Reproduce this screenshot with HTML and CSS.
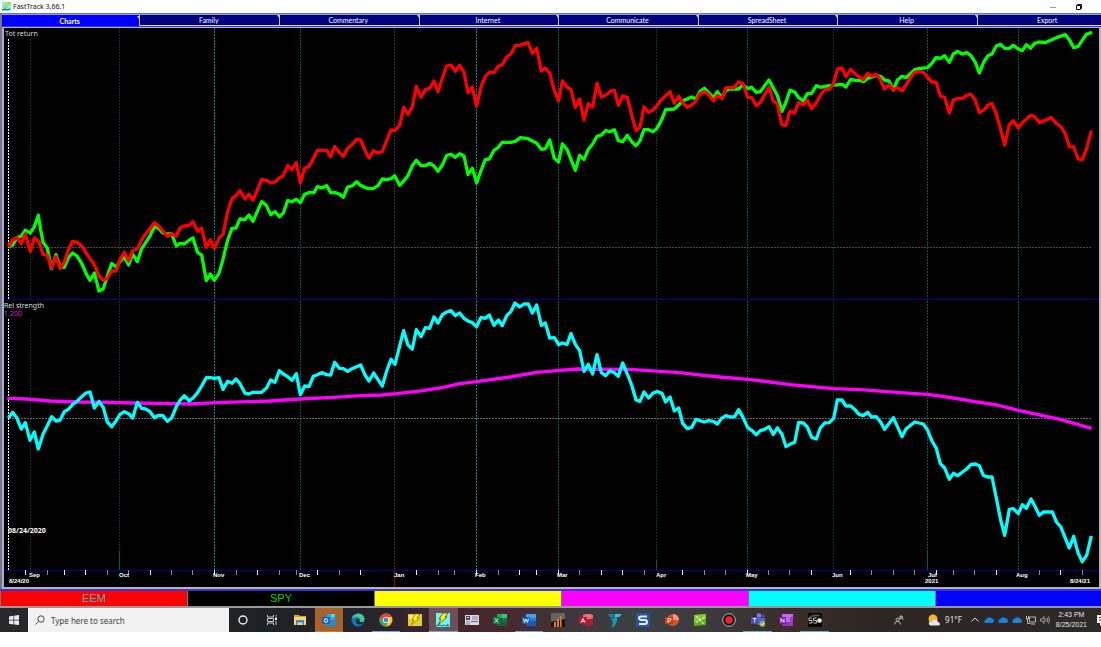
FILE: index.html
```html
<!DOCTYPE html>
<html lang="en">
<head>
<meta charset="utf-8">
<title>FastTrack 3.66.1</title>
<link rel="stylesheet" href="styles.css">
</head>
<body>
<header class="titlebar">
  <svg class="app-icon" viewBox="0 0 9 9" aria-hidden="true"><rect width="9" height="9" fill="#7ff4f4"/><path d="M5 0h3L6 3 3 7 2 8l1-4z" fill="#f4ee20" stroke="#6b7114" stroke-width=".4"/><path d="M0 8l3-1 1 1 4-1" stroke="#065" fill="none"/></svg>
  <h1 class="title">FastTrack 3.66.1</h1>
  <div class="window-buttons">
    <button class="win-btn" aria-label="Minimize"><svg viewBox="0 0 6 6"><path d="M0 3.5h6" stroke="#999"/></svg></button>
    <button class="win-btn" aria-label="Restore"><svg viewBox="0 0 6 6"><path d="M.5 1.5h4v4h-4zM1.5 1.5v-1h4v4h-1" stroke="#111" fill="none"/></svg></button>
  </div>
</header>
<main class="frame">
  <nav class="tabs">
    <button class="tab tab-active">Charts</button>
    <button class="tab">Family</button>
    <button class="tab">Commentary</button>
    <button class="tab">Internet</button>
    <button class="tab">Communicate</button>
    <button class="tab">SpreadSheet</button>
    <button class="tab">Help</button>
    <button class="tab">Export</button>
  </nav>
  <section class="chart-frame">
    <svg class="chart" viewBox="4 28 1095 559" role="img" aria-label="Total return and relative strength of EEM and SPY">
      <rect x="4" y="28" width="1095" height="559" fill="#000"/>
      <path class="grid dim" d="M30.5 39V299M30.5 319V570M119.5 28V570M833.5 28V570M656.5 28V570"/>
      <path class="grid mid" d="M300.5 28V570M558.5 28V570M747.5 28V570M927.5 28V570M1018.5 28V570"/>
      <path class="grid bright" d="M214.5 28V570M476.5 28V570"/>
      <path class="grid year" d="M394.5 28V570"/>
      <path class="base upper" d="M9 247.5H1092"/>
      <path class="base" d="M9 418.5H1092"/>
      <path class="cursor" d="M8.5 39V299M8.5 319V570"/>
      <path class="divider" d="M4 299.5H1099M4 570.5H1099"/>
      <path d="M119.5 551V570M927.5 551V570M656.5 560V570" stroke="#005a5a"/>
      <path d="M394.5 570V587" stroke="#900"/>
      <path class="tick" d="M25.5 570v5M64.5 570v5M85.5 570v5M150.5 570v5M214.5 570v5M257.5 570v5M317.5 570v5M360.5 570v5M416.5 570v5M476.5 570v5M519.5 570v5M536.5 570v5M558.5 570v5M601.5 570v5M622.5 570v5M682.5 570v5M747.5 570v5M811.5 570v5M850.5 570v5M936.5 570v5M996.5 570v5M1060.5 570v5"/>
      <path class="tick faint" d="M47.5 570v5M107.5 570v5M128.5 570v5M171.5 570v5M192.5 570v5M236.5 570v5M279.5 570v5M296.5 570v5M339.5 570v5M438.5 570v5M454.5 570v5M498.5 570v5M579.5 570v5M644.5 570v5M704.5 570v5M725.5 570v5M768.5 570v5M789.5 570v5M871.5 570v5M893.5 570v5M914.5 570v5M953.5 570v5M974.5 570v5M1039.5 570v5M1082.5 570v5"/>
      <g class="series" transform="scale(.333333)">
        <polyline stroke="#f0f" points="22,1195 80,1197 150,1203 240,1206 330,1207 400,1209 480,1210 570,1212 650,1208 810,1203 900,1197 1000,1192 1080,1187 1145,1185 1190,1181 1270,1172 1330,1162 1380,1151 1430,1145 1530,1131 1610,1117 1680,1111 1730,1107 1890,1108 1980,1114 2040,1118 2110,1126 2160,1131 2245,1138 2310,1146 2370,1154 2500,1166 2580,1169 2700,1178 2782,1183 2860,1194 2920,1204 2990,1215 3055,1231 3180,1258 3275,1285"/>
        <polyline stroke="#0f0" points="25,741 38,735 51,713 64,708 76,691 91,699 103,680 115,646 122,690 129,726 142,745 154,806 168,764 180,800 193,802 205,773 218,759 231,768 245,790 258,820 270,841 283,819 297,873 310,866 322,828 335,791 348,800 360,785 373,770 386,795 398,762 412,785 425,746 437,728 450,708 463,680 476,685 489,699 502,702 515,702 529,738 540,730 553,732 568,720 579,714 593,758 605,765 619,842 631,822 643,841 657,820 669,778 683,720 696,685 708,684 720,657 735,659 747,645 759,664 772,634 785,605 799,616 812,644 825,635 838,650 850,639 863,602 876,605 889,598 901,608 914,583 927,578 942,578 952,560 965,564 980,557 992,578 1005,578 1018,582 1030,592 1043,561 1056,558 1070,545 1080,555 1093,562 1107,566 1121,565 1134,557 1147,537 1160,539 1173,536 1184,527 1199,556 1211,543 1224,527 1237,497 1249,481 1263,497 1276,497 1289,490 1302,498 1314,514 1327,495 1340,466 1353,463 1366,472 1379,461 1392,468 1404,524 1417,505 1430,549 1443,512 1456,479 1468,477 1482,451 1495,442 1507,427 1533,427 1546,424 1561,413 1584,416 1610,430 1624,448 1636,446 1649,420 1663,475 1676,486 1687,432 1701,448 1726,511 1739,466 1752,479 1765,448 1778,432 1791,409 1804,405 1817,392 1830,395 1843,389 1855,422 1868,425 1882,406 1895,425 1908,437 1920,422 1932,389 1946,389 1959,395 1970,386 1984,362 1997,329 2023,327 2036,315 2049,302 2062,297 2075,291 2088,297 2100,275 2113,265 2126,278 2140,293 2152,275 2165,292 2178,271 2190,267 2216,267 2229,254 2243,266 2255,262 2269,277 2281,275 2294,257 2307,240 2320,264 2332,286 2346,334 2358,306 2370,271 2384,276 2396,293 2410,303 2422,281 2435,280 2449,257 2461,262 2488,257 2526,253 2538,261 2552,238 2565,241 2582,241 2590,245 2603,235 2629,226 2641,229 2655,241 2667,243 2680,270 2692,241 2706,229 2718,233 2744,209 2757,206 2782,203 2796,190 2809,172 2821,175 2834,167 2848,187 2860,162 2873,154 2887,162 2900,158 2913,167 2926,187 2938,219 2952,185 2964,167 2976,162 2989,138 3002,133 3014,145 3028,145 3040,136 3055,147 3067,152 3079,134 3092,145 3104,130 3118,126 3135,128 3169,113 3196,104 3208,119 3221,143 3234,140 3259,103 3276,97"/>
        <polyline stroke="#f00" points="25,741 38,720 51,713 64,731 76,702 91,754 103,714 116,723 129,763 142,766 154,804 168,770 180,806 193,786 205,750 218,724 231,727 245,738 258,758 270,776 283,793 297,828 310,841 322,835 335,813 348,813 360,779 373,757 386,782 398,752 412,746 425,720 437,702 450,686 463,668 476,678 489,693 502,709 515,702 529,708 540,684 553,678 568,676 579,665 593,694 605,685 619,742 631,719 643,746 657,715 669,703 683,635 696,596 708,587 720,572 735,597 747,583 759,601 772,570 785,538 799,541 812,549 825,546 838,534 850,527 863,497 876,509 889,488 901,549 914,504 927,500 940,476 952,451 980,451 992,470 1004,440 1018,457 1030,469 1043,445 1056,434 1070,418 1082,420 1094,449 1107,474 1121,452 1134,459 1147,455 1160,422 1173,390 1184,392 1199,377 1211,322 1224,343 1237,321 1249,259 1263,292 1276,269 1289,265 1302,243 1314,275 1327,235 1340,198 1353,195 1366,214 1379,196 1392,217 1404,278 1417,262 1430,318 1443,261 1456,229 1468,217 1482,217 1495,199 1507,194 1520,171 1533,162 1546,137 1558,136 1584,128 1597,160 1610,145 1624,213 1636,204 1649,219 1663,272 1676,303 1687,243 1701,261 1713,269 1726,322 1739,298 1752,360 1765,311 1778,321 1791,250 1804,291 1817,286 1830,275 1843,271 1855,316 1868,288 1882,293 1895,345 1908,392 1920,382 1932,321 1946,337 1959,330 1970,318 1984,299 1997,288 2010,275 2023,310 2036,289 2049,309 2062,322 2075,315 2088,303 2100,281 2113,275 2126,284 2140,302 2152,287 2166,296 2178,263 2202,263 2216,246 2229,251 2243,292 2255,293 2269,317 2281,308 2307,261 2320,303 2332,312 2345,373 2357,377 2370,334 2384,339 2396,308 2410,314 2422,301 2435,326 2449,309 2461,287 2474,268 2488,268 2500,253 2512,207 2526,204 2538,230 2552,208 2565,221 2577,230 2590,239 2603,220 2615,228 2629,223 2641,238 2653,267 2668,254 2680,270 2692,263 2706,273 2718,255 2731,234 2744,217 2757,215 2770,217 2782,231 2796,246 2809,248 2821,288 2834,292 2848,339 2860,300 2873,296 2887,295 2900,286 2913,283 2926,301 2938,338 2952,330 2964,315 2976,311 2989,342 3002,389 3014,435 3028,374 3040,362 3055,384 3067,368 3092,346 3104,350 3118,368 3155,353 3169,371 3182,379 3196,401 3208,440 3221,441 3234,476 3247,480 3261,442 3274,392"/>
        <polyline stroke="#0ff" points="25,1255 38,1237 51,1255 64,1287 76,1268 90,1321 103,1296 115,1347 129,1303 142,1277 155,1250 168,1263 180,1261 193,1235 205,1228 218,1213 231,1204 245,1190 258,1179 270,1176 283,1224 297,1204 310,1223 322,1266 335,1280 348,1263 360,1243 373,1235 386,1241 398,1254 412,1207 425,1225 437,1227 450,1235 463,1253 476,1246 489,1247 502,1264 515,1254 529,1220 540,1201 553,1187 568,1203 579,1194 593,1178 605,1158 619,1133 631,1133 643,1135 657,1133 669,1168 683,1144 696,1150 708,1137 720,1151 735,1180 747,1182 759,1177 785,1177 799,1165 812,1140 825,1147 838,1112 850,1122 863,1130 876,1141 889,1121 901,1184 914,1158 927,1160 940,1129 952,1124 965,1118 980,1124 992,1125 1004,1087 1018,1105 1030,1106 1043,1114 1056,1106 1070,1100 1082,1095 1095,1125 1107,1143 1121,1119 1134,1139 1147,1158 1160,1113 1173,1078 1185,1093 1199,1038 1211,992 1224,1035 1237,1047 1249,989 1263,1010 1276,983 1289,985 1302,951 1314,969 1327,944 1340,936 1353,932 1366,947 1379,939 1392,955 1404,963 1417,968 1430,980 1443,952 1456,955 1468,945 1482,976 1495,960 1507,977 1520,947 1533,934 1545,909 1559,921 1572,912 1585,912 1597,939 1610,915 1624,976 1636,969 1649,1014 1663,1013 1676,1034 1687,1029 1701,1033 1713,1001 1726,1033 1739,1052 1752,1114 1765,1093 1778,1122 1791,1064 1804,1118 1817,1127 1830,1112 1843,1118 1855,1129 1868,1089 1882,1122 1895,1155 1908,1200 1920,1204 1932,1176 1946,1194 1959,1179 1972,1175 1986,1180 1997,1206 2010,1191 2023,1233 2036,1224 2048,1270 2062,1286 2075,1282 2088,1258 2113,1266 2126,1262 2140,1264 2152,1272 2165,1255 2178,1247 2190,1251 2204,1250 2216,1229 2229,1252 2243,1283 2255,1291 2269,1304 2281,1292 2294,1288 2307,1280 2320,1303 2332,1284 2346,1303 2358,1340 2370,1333 2384,1327 2396,1267 2410,1269 2422,1281 2435,1312 2449,1317 2461,1284 2474,1269 2488,1268 2501,1255 2512,1200 2526,1200 2538,1218 2552,1218 2565,1229 2577,1243 2590,1247 2603,1237 2615,1251 2629,1250 2641,1265 2654,1288 2680,1253 2706,1310 2718,1287 2744,1266 2770,1272 2782,1289 2796,1323 2809,1345 2821,1391 2834,1404 2848,1438 2860,1420 2873,1427 2900,1407 2913,1393 2926,1392 2938,1397 2950,1426 2962,1431 2976,1431 2989,1494 3002,1560 3014,1606 3028,1528 3040,1526 3055,1541 3067,1514 3079,1525 3093,1497 3104,1517 3118,1546 3130,1536 3157,1536 3170,1567 3182,1580 3208,1644 3221,1609 3234,1658 3247,1685 3260,1666 3274,1608"/>
      </g>
      <g class="pane-label">
        <text x="5" y="36">Tot return</text>
        <text x="4" y="308">Rel strength</text>
        <text x="4" y="316" fill="#00a0a0">1</text>
        <text x="10" y="316" fill="#e010d8">200</text>
      </g>
      <text class="cursor-date" x="8" y="533">08/24/2020</text>
      <g class="axis-label">
        <text x="29" y="577">Sep</text><text x="119" y="577">Oct</text><text x="213" y="577">Nov</text>
        <text x="299" y="577">Dec</text><text x="394" y="577">Jan</text><text x="475" y="577">Feb</text>
        <text x="557" y="577">Mar</text><text x="656" y="577">Apr</text><text x="746" y="577">May</text>
        <text x="832" y="577">Jun</text><text x="928" y="577">Jul</text><text x="1016" y="577">Aug</text>
        <text x="9" y="583">8/24/20</text><text x="925" y="583">2021</text><text x="1070" y="583">8/24/21</text>
      </g>
    </svg>
  </section>
  <nav class="symbols" aria-label="Symbols">
    <button class="symbol eem">EEM</button>
    <button class="symbol spy">SPY</button>
    <button class="symbol yellow" aria-label="Yellow slot"></button>
    <button class="symbol magenta" aria-label="Magenta slot"></button>
    <button class="symbol cyan" aria-label="Cyan slot"></button>
    <button class="symbol blue" aria-label="Blue slot"></button>
  </nav>
</main>
<footer class="taskbar">
  <button class="start" aria-label="Start"><svg viewBox="0 0 10 10"><path d="M0 1.5l4.5-.7v4H0zM5.2.7L10 0v4.8H5.2zM0 5.4h4.5v4L0 8.7zM5.2 5.4H10V10l-4.8-.6z" fill="#eee"/></svg></button>
  <label class="search">
    <svg viewBox="0 0 10 10" aria-hidden="true"><circle cx="6" cy="4" r="3.2" fill="none" stroke="#333" stroke-width=".9"/><path d="M3.7 6.3L.4 9.6" stroke="#333" stroke-width=".9"/></svg>
    <input class="search-input" type="text" placeholder="Type here to search" aria-label="Type here to search">
  </label>
  <nav class="apps">
    <button class="app" aria-label="Cortana"><svg viewBox="0 0 14 14"><circle cx="7" cy="7" r="4" fill="none" stroke="#eee" stroke-width="1.4"/></svg></button>
    <button class="app" aria-label="Task view"><svg viewBox="0 0 14 14"><path d="M2.500 2v2h6V2M2.500 12v-2h6v2M2.500 5.500h6v3h-6zM11 2v1.500M11 8v4" fill="none" stroke="#ddd" stroke-width=".9"/><rect x="10" y="4.500" width="2" height="2.500" fill="#eee"/></svg></button>
    <button class="app" aria-label="File Explorer"><svg viewBox="0 0 14 14"><path d="M1 2h5l1 1h6v9H1z" fill="#dca034"/><path d="M1 4h12v8H1z" fill="#ffd777"/><path d="M3 7h8v5H9.500V9.500h-5V12H3z" fill="#2d8fdd"/></svg></button>
    <button class="app alert" aria-label="Outlook"><svg viewBox="0 0 14 14"><path d="M5 1h8v6H5z" fill="#28a8ea"/><path d="M4 6l5 3 5-3v7H4z" fill="#1490df"/><path d="M9 1h4v3H9z" fill="#50d9ff"/><rect y="4" width="8" height="7" rx="1" fill="#0f66b7"/><circle cx="4" cy="7.500" r="1.800" fill="none" stroke="#fff"/></svg></button>
    <button class="app" aria-label="Edge"><svg viewBox="0 0 14 14"><circle cx="7" cy="7" r="6.500" fill="#1673bf"/><path d="M.7 6C2-.5 13-1.500 13.500 6c0 3-4 3.500-5 2 1-2-.5-4-3-4S1.500 5 .7 6z" fill="#45cc84"/><path d="M.6 6C2 1 6 0 9 1 6 1 3 3 .6 6z" fill="#28b5d2"/><path d="M5 8c0-1.500 1-2.500 2.500-2.500C9 6 8 7.500 8.500 8.500c1 1.500 3 1 4.500.5-1 2-3 2.500-4.500 2.500C6.500 11.500 5 10 5 8z" fill="#172632"/></svg></button>
    <button class="app running" aria-label="Chrome"><svg viewBox="0 0 14 14"><circle cx="7" cy="7" r="6.500" fill="#fbc82b"/><path d="M1.400 3.700A6.500 6.500 0 0 1 12.700 4H7L4 8.500z" fill="#e74135"/><path d="M1.400 3.700A6.500 6.500 0 0 0 6.500 13.500L9.500 9 4.500 8.500z" fill="#34a853"/><circle cx="7" cy="7" r="3.100" fill="#fff"/><circle cx="7" cy="7" r="2.400" fill="#4285f4"/></svg></button>
    <button class="app" aria-label="FastTrack data"><svg viewBox="0 0 14 14"><rect y="1" width="14" height="12" fill="#e5ca34"/><path d="M1 2h5v4H1z" fill="#f5e483"/><path d="M7 1h5L9 5h2.500L3 12l3-5H4z" fill="#fff200" stroke="#635a12" stroke-width=".6"/></svg></button>
    <button class="app current" aria-label="FastTrack"><svg viewBox="0 0 14 14"><rect width="14" height="14" fill="#6ef4f5"/><path d="M7 0h5L9 4h2L2 12l3-6H3z" fill="#ffef13" stroke="#343810" stroke-width=".7"/><path d="M0 13l4-1 2 1 2-1 2 1 2-2v3" stroke="#08777b" fill="none"/></svg></button>
    <button class="app" aria-label="Cards"><svg viewBox="0 0 14 14"><rect y="2" width="14" height="10" fill="#d8d8df"/><path d="M1 3h4v4H1z" fill="#444853"/><path d="M2 4h2v1H2z" fill="#ddd"/><path d="M7 4h6M7 6h6M1 9h4M1 11h4" stroke="#55586c" stroke-width=".6"/><path d="M6 8.500h7" stroke="#7163b8" stroke-width="1.200"/></svg></button>
    <button class="app" aria-label="Excel"><svg viewBox="0 0 14 14"><path d="M4 1h10v12H4z" fill="#185c37"/><path d="M4 1h5v4H4z" fill="#21a366"/><path d="M9 1h5v4H9z" fill="#33c481"/><path d="M9 5h5v4H9z" fill="#107c41"/><rect y="4" width="7" height="7" fill="#107c41"/><path d="M2 5.500l3 4M5 5.500l-3 4" stroke="#fff" stroke-width=".9"/></svg></button>
    <button class="app running" aria-label="Word"><svg viewBox="0 0 14 14"><path d="M4 1h10v12H4z" fill="#185abd"/><path d="M4 1h10v4H4z" fill="#41a5ee"/><path d="M4 5h10v3H4z" fill="#2b7cd3"/><rect y="4" width="8" height="7" fill="#185abd"/><path d="M1.500 5.500l1 4L4 6l1.500 3.500 1-4" stroke="#fff" fill="none" stroke-width=".9"/></svg></button>
    <button class="app" aria-label="Bar charts"><svg viewBox="0 0 14 14"><rect width="14" height="14" fill="#17120f"/><path d="M0 0h14v6L0 9z" fill="#69625d"/><path d="M3 14V9h2v5zM6 14V6h2v8zM9 14V3h1.500v11z" fill="#ed7920"/></svg></button>
    <button class="app" aria-label="Access"><svg viewBox="0 0 14 14"><path d="M4 2c2-1.500 8-1.500 10 0v10c-2 1.500-8 1.500-10 0z" fill="#a52030"/><path d="M4 2c2-1.500 8-1.500 10 0v3c-2 1.500-8 1.500-10 0z" fill="#e67378"/><rect y="4" width="8" height="7" fill="#b61b32"/><path d="M2 9.500l2-4 2 4M2.700 8.500h2.600" stroke="#fff" fill="none" stroke-width=".9"/></svg></button>
    <button class="app" aria-label="TC"><svg viewBox="0 0 14 14"><path d="M0 1h6l-1 4-3-1z" fill="#13849f"/><path d="M7 1h7l-3 3H8L6 7z" fill="#23c7e7"/><path d="M2 4l3 2 4-2v4l-3 6H4l1-5z" fill="#149bc2"/></svg></button>
    <button class="app" aria-label="Snagit"><svg viewBox="0 0 14 14"><rect width="14" height="14" fill="#2355a2"/><path d="M11 3.500H5Q3 3.500 3 5t2 2h4q2 0 2 2t-2 2H3" stroke="#e7f0f9" stroke-width="2" fill="none"/></svg></button>
    <button class="app" aria-label="PowerPoint"><svg viewBox="0 0 14 14"><circle cx="8" cy="7" r="6" fill="#d35230"/><path d="M8 1a6 6 0 0 1 6 6H8z" fill="#ff9274"/><rect y="4" width="8" height="7" fill="#c43e1c"/><path d="M3 10V5.500h1.500q1.500 0 1.500 1.200T4.500 8H3" stroke="#fff" fill="none" stroke-width=".9"/></svg></button>
    <button class="app" aria-label="Network share"><svg viewBox="0 0 14 14"><path d="M1 2l12-1v11L1 13z" fill="#5fae17"/><path d="M1 2l12-1v4L1 10z" fill="#84c92a"/><path d="M4 4l3 3 4-2M7 7l3 3M7 7l-3 2" stroke="#fff" stroke-width=".5" fill="none"/><g fill="#fff"><circle cx="4" cy="4" r=".8"/><circle cx="7" cy="7" r="1.200"/><circle cx="11" cy="5" r=".8"/><circle cx="10" cy="10" r=".8"/><circle cx="4" cy="9" r=".8"/></g></svg></button>
    <button class="app" aria-label="Recorder"><svg viewBox="0 0 14 14"><circle cx="7" cy="7" r="6.300" fill="#101010" stroke="#ddd" stroke-width=".8"/><circle cx="7" cy="7" r="3.800" fill="#f32125"/></svg></button>
    <button class="app running" aria-label="Teams"><svg viewBox="0 0 14 14"><circle cx="8" cy="2.500" r="2.300" fill="#7b83eb"/><circle cx="12" cy="3" r="1.500" fill="#5059c9"/><path d="M5 5h9v4q0 3-3 3H8q-3 0-3-3z" fill="#5b63d0"/><rect y="4" width="7" height="7" fill="#464eb8"/><path d="M2 5.500h3.500M3.700 5.500v4" stroke="#fff" stroke-width=".9"/><circle cx="11.500" cy="11" r="2.800" fill="#8cc63f"/><path d="M10 11l1 1 2-2" stroke="#fff" fill="none" stroke-width=".7"/></svg></button>
    <button class="app" aria-label="OneNote"><svg viewBox="0 0 14 14"><path d="M3 1h11v12H3z" fill="#ca64ea"/><path d="M3 9h8v4H3z" fill="#9332bf"/><path d="M11 4h3v9h-3z" fill="#a13bd0"/><rect y="4" width="7" height="7" fill="#7719aa"/><path d="M2 9.500v-4l3 4v-4" stroke="#fff" fill="none" stroke-width=".9"/></svg></button>
    <button class="app running" aria-label="SSO"><svg viewBox="0 0 14 14"><rect width="14" height="14" rx="1" fill="#080808"/><path d="M1 4Q7-1 13 3" fill="#555"/><path d="M4 5H1v2.500h3V10H1M8.500 5h-3v2.500h3V10h-3" stroke="#ddd" fill="none" stroke-width=".9"/><circle cx="11.500" cy="7.500" r="2.300" fill="#eee"/></svg></button>
  </nav>
  <div class="tray">
    <button class="tray-btn people" aria-label="People"><svg viewBox="0 0 10 10"><circle cx="3.500" cy="4.500" r="1.500" fill="none" stroke="#ddd" stroke-width=".8"/><path d="M.5 9.500q0-3 3-3t3 3M6 1h2q1.500 1 0 2H6zM8 3l1.500 2M6 3v2" fill="none" stroke="#ddd" stroke-width=".8"/></svg></button>
    <button class="weather"><svg viewBox="0 0 12 12" aria-hidden="true"><circle cx="5" cy="5" r="4.500" fill="#f8b42b"/><path d="M3 11.500Q0 11 1 8.500q1-1.500 3-1 1-2 4-1.500 1.500.5 2 2 2 .5 2 2t-1.500 1.500z" fill="#e1e7ee"/></svg><span>91°F</span></button>
    <div class="status">
      <button class="tray-btn" aria-label="Show hidden icons"><svg viewBox="0 0 10 10"><path d="M1.500 6.500L5 3l3.500 3.500" fill="none" stroke="#ddd"/></svg></button>
      <button class="tray-btn" aria-label="OneDrive"><svg viewBox="0 0 10 10"><path d="M2 8Q0 8 .5 5.500q.5-1.500 2-1.500Q4 1 7 3q3 .5 3 3Q9.500 8 8 8z" fill="#1783dd"/></svg></button>
      <button class="tray-btn" aria-label="OneDrive business"><svg viewBox="0 0 10 10"><path d="M2 8Q0 8 .5 5.500q.5-1.500 2-1.500Q4 1 7 3q3 .5 3 3Q9.500 8 8 8z" fill="#1783dd"/></svg></button>
      <button class="tray-btn" aria-label="OneDrive shared"><svg viewBox="0 0 10 10"><path d="M2 8Q0 8 .5 5.500q.5-1.500 2-1.500Q4 1 7 3q3 .5 3 3Q9.500 8 8 8z" fill="#1783dd"/></svg></button>
      <button class="tray-btn" aria-label="Network"><svg viewBox="0 0 10 10"><path d="M3.500 2h6v5h-6zM5 9h4M.5 1v3h2V1M1.500 4v4.500h3" fill="none" stroke="#ddd" stroke-width=".8"/></svg></button>
      <button class="tray-btn" aria-label="Volume"><svg viewBox="0 0 10 10"><path d="M.5 4h1.500l2-2.500v7L2 6H.5zM5.500 3.500q1 1.500 0 3M7 2.500q1.800 2.500 0 5M8.500 1.500q2 3.500 0 7" fill="none" stroke="#ccc" stroke-width=".7"/></svg></button>
    </div>
    <button class="clock"><time>2:43 PM</time><time>8/25/2021</time></button>
    <button class="notify" aria-label="Notifications"><svg viewBox="0 0 10 12"><path d="M0 1h10v8H6l-3 3V9H0z" fill="#eee"/><path d="M2 3.500h8M2 6h8" stroke="#444"/></svg></button>
  </div>
</footer>
</body>
</html>
```
FILE: styles.css
```css
* { box-sizing: border-box; }

body {
  margin: 0;
  background: #fff;
  font-family: "Noto Sans", sans-serif;
  overflow-x: hidden;
}

button {
  margin: 0;
  padding: 0;
  border: 0;
  background: none;
  color: inherit;
  font: inherit;
}

svg { display: block; }

.titlebar {
  display: flex;
  align-items: center;
  height: 13px;
  padding: 0 19px 0 2px;
  gap: 2px;
}

.app-icon { width: 9px; height: 9px; }

.title {
  margin: 0;
  font-size: 7px;
  font-weight: 400;
  line-height: 12px;
  color: #111;
}

.window-buttons { display: flex; gap: 20px; margin-left: auto; }
.win-btn svg { width: 6px; height: 6px; }

.frame {
  border-top: 1px solid #777;
  border-left: 2px solid #777;
  background: #777;
}

.tabs {
  display: flex;
  height: 13px;
  overflow: hidden;
  border-top: 1px solid #9c9cd8;
  border-bottom: 1px solid #3030ff;
  background: #d8d8e8;
}

.tab {
  flex: 0 0 12.7%;
  height: 10px;
  border-right: 1px solid #c8c8c8;
  background: #000080;
  color: #fff;
  font-family: Lato, sans-serif;
  font-size: 7px;
  line-height: 10px;
}

.tab:first-child { flex-basis: 12.6%; }

.tab:not(:last-child)::after {
  content: "";
  float: right;
  border-top: 3px solid #c8c8c8;
  border-left: 2px solid transparent;
}

.tab-active { height: 11px; background: #00f; font-weight: 700; }

.chart-frame {
  border: solid #b4b4b8;
  border-width: 1px 2px 2px;
  border-left-color: #a9a9e0;
}

.chart { width: 100%; height: auto; }

.grid { fill: none; stroke-dasharray: 2 1; }
.dim { stroke: #003838; }
.mid { stroke: #005858; }
.bright { stroke: #008c8c; }
.year { stroke: #4a2828; }
.base { stroke: #686868; stroke-dasharray: 2 1; }
.upper { stroke: #484848; }
.cursor { stroke: #fff; stroke-dasharray: 2 1; }
.divider { stroke: #0000a0; }
.tick { stroke: #eee; }
.faint { stroke: #888; }

.series polyline {
  fill: none;
  stroke-width: 10;
  stroke-linejoin: round;
}

.pane-label { font-size: 7px; fill: #ddd; }
.cursor-date { font: 700 7px "Open Sans", sans-serif; fill: #fff; }
.axis-label { font: 700 6px "Liberation Sans", sans-serif; fill: #fff; }

.symbols {
  display: flex;
  height: 19px;
  margin-left: -2px;
  padding-left: 1px;
  overflow: hidden;
  border-top: 2px solid #3535dc;
  border-bottom: 2px solid #999;
}

.symbol {
  flex: 0 0 17%;
  border-right: 1px solid #777;
  font-family: "Liberation Sans", sans-serif;
  font-size: 11px;
  line-height: 15px;
}

.eem { background: #f00; color: #5ab0b0; }
.spy { background: #000; color: #00d000; }
.yellow { background: #ff0; }
.magenta { background: #f0f; }
.cyan { background: #0ff; }
.blue { background: #00f; }

.taskbar {
  display: flex;
  height: 24px;
  overflow: hidden;
  background: linear-gradient(90deg, #29292c 0, #1f2026 24%, #25242a 33%, #44252b 42%, #48282e 46%, #3f3539 51%, #3b4045 58%, #3d3a3d 64%, #3a2d29 72%, #2d2524 80%, #2c2928 100%);
  color: #e4e4e4;
}

.start { flex: 0 0 28px; display: grid; place-items: center; }
.start svg { width: 10px; height: 10px; }

.search {
  flex: 0 1 201px;
  display: flex;
  align-items: center;
  gap: 6px;
  padding: 0 7px;
  background: #f2f2f2;
}

.search svg { width: 10px; height: 10px; }

.search-input {
  flex: 1;
  min-width: 0;
  padding: 0;
  border: 0;
  background: none;
  font: 8px "Noto Sans", sans-serif;
}

.search-input::placeholder { color: #444; opacity: 1; }

.apps {
  flex: 0 0 54.5%;
  display: grid;
  grid-template-columns: repeat(21, 1fr);
}

.app { display: grid; place-items: center; border-bottom: 1px solid transparent; }
.app svg { width: 14px; height: 14px; }
.running { border-color: #6ba7d6; }
.current { background: #6d5155; border-color: #6ba7d6; }
.alert { background: #a7622c; border-color: #e56e17; }

.tray {
  flex: 1;
  display: flex;
  align-items: center;
  justify-content: flex-end;
}

.tray-btn svg { width: 10px; height: 10px; }
.people { margin-right: 24px; }

.weather {
  display: flex;
  align-items: center;
  gap: 5px;
  margin-right: 8px;
  font-size: 8px;
  line-height: 12px;
}

.weather svg { width: 12px; height: 12px; }

.status { display: flex; gap: 4px; }

.clock {
  display: grid;
  margin: 0 10px 0 6px;
  font-family: "Liberation Sans", sans-serif;
  font-size: 7px;
  line-height: 10px;
}

.notify { width: 4px; overflow: hidden; }
.notify svg { width: 10px; height: 12px; }
```
